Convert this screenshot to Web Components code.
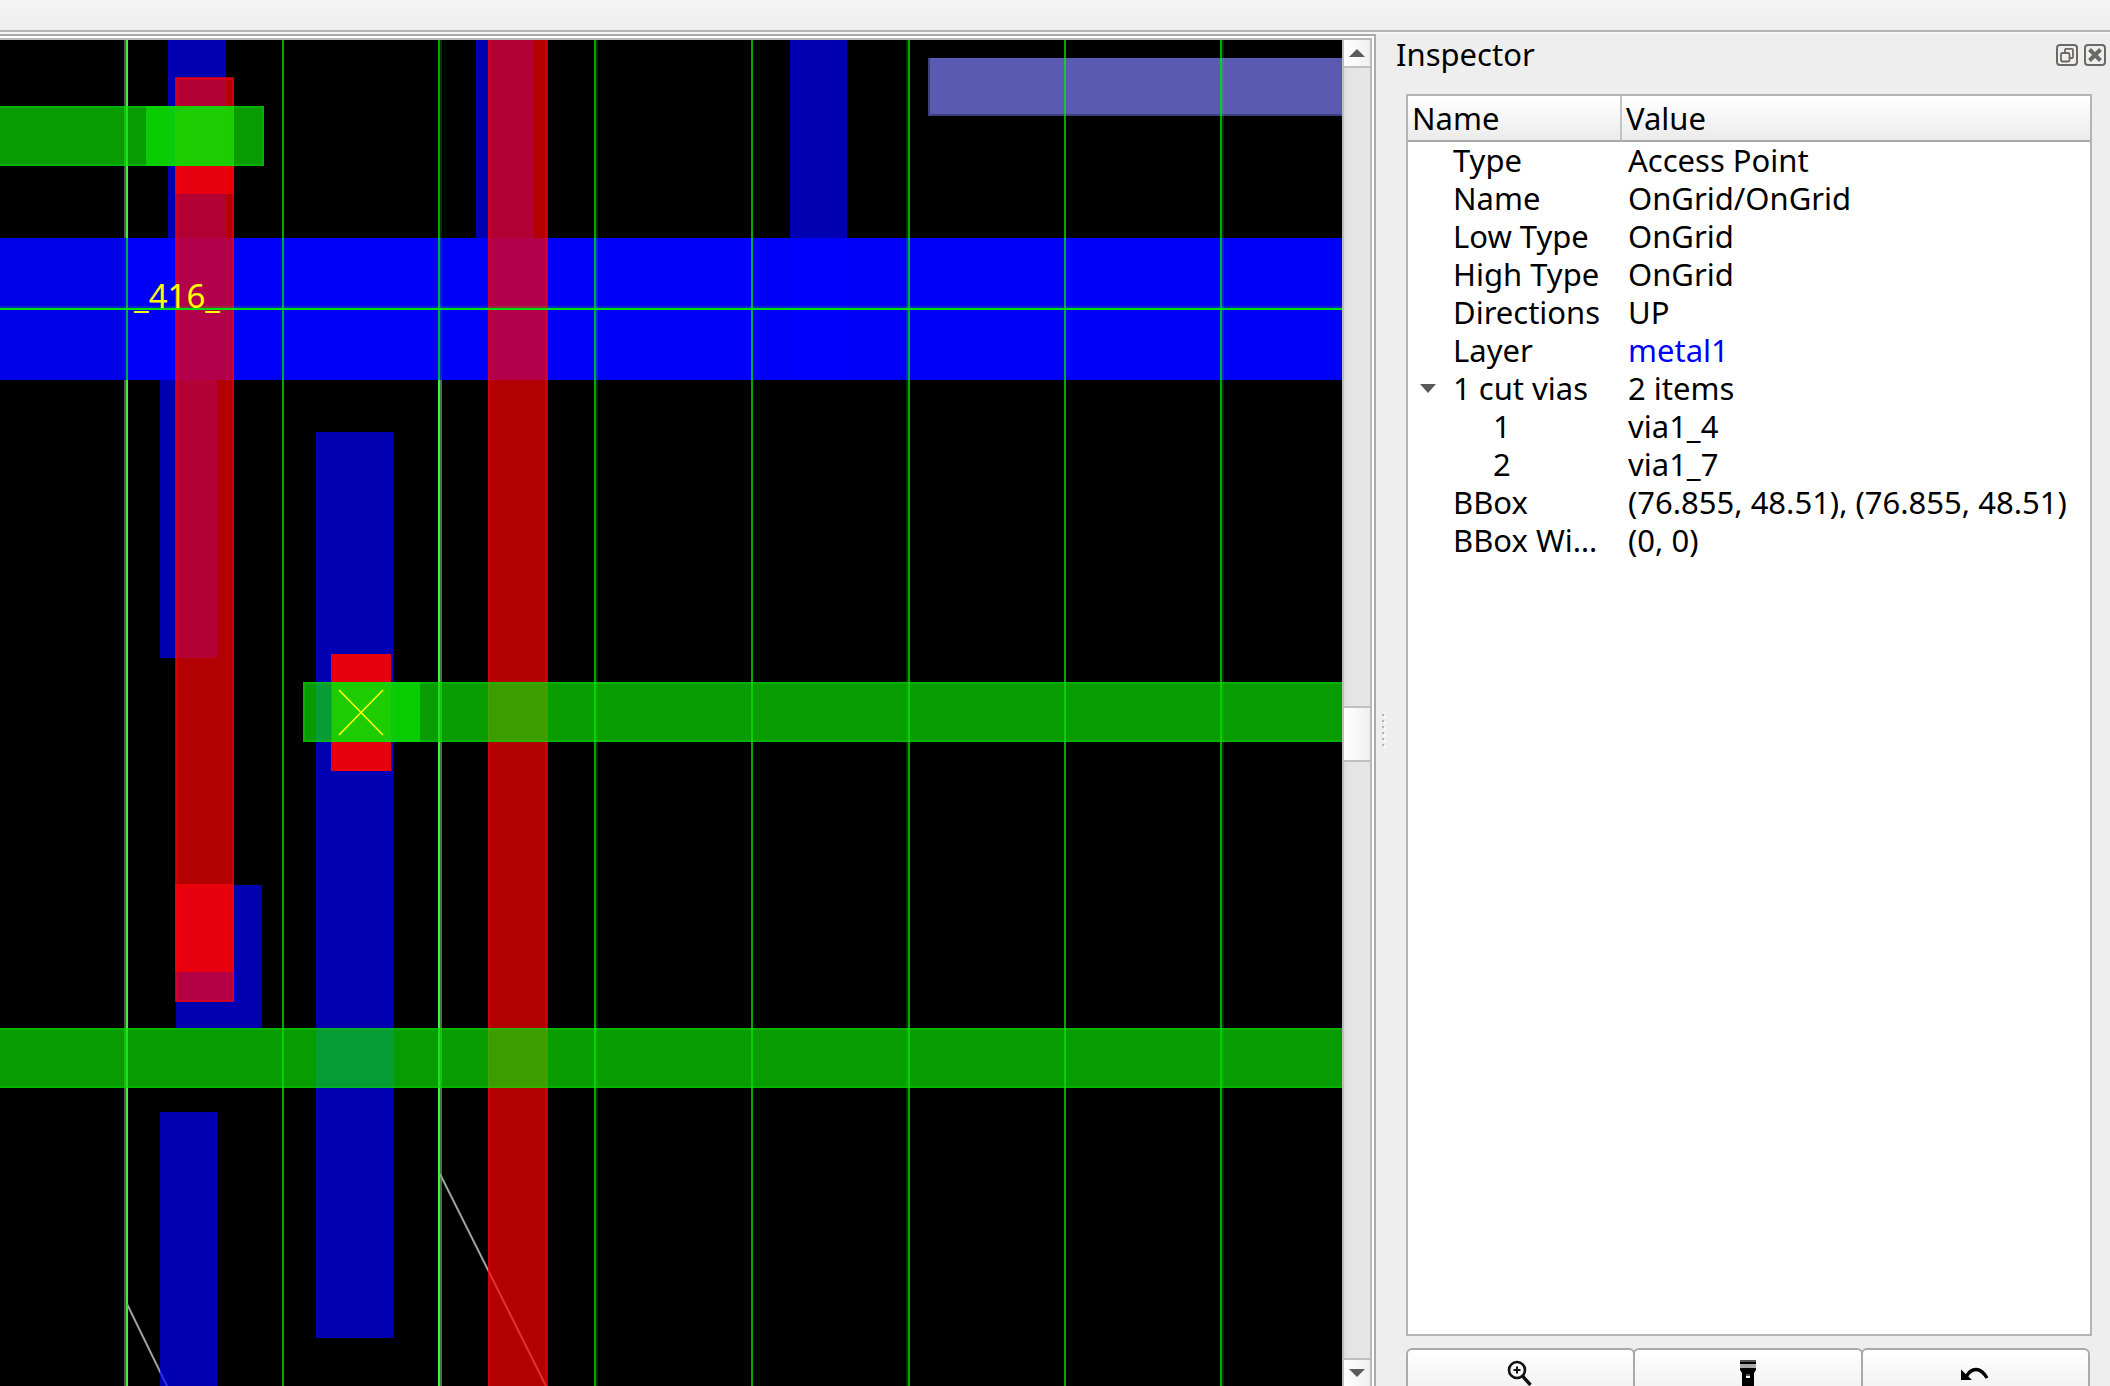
<!DOCTYPE html>
<html lang="en">
<head>
<meta charset="utf-8">
<title>Layout viewer</title>
<style>
  html, body { margin: 0; height: 100%; overflow: hidden; background: #eee; }
  body { font: 31px/36px "Noto Sans", "Open Sans", sans-serif; color: #000; }
</style>
</head>
<body>
<layout-app></layout-app>

<script>
class ShadowElement extends HTMLElement {
  constructor() {
    super();
    this.attachShadow({ mode: "open" }).innerHTML = this.constructor.markup;
  }
}

class LayoutApp extends ShadowElement {
  static markup = `
    <style>
      :host { display: flex; flex-direction: column; height: 100vh; }
      header { flex: none; height: 30px; background: linear-gradient(#f4f4f4, #eee);
               border-bottom: 2px solid #b4b4b4; }
      main { flex: 1; min-height: 0; display: flex; border-top: 2px solid #f6f6f6; }
      .view { flex: 1; min-width: 0; display: flex; border: solid #ababab; border-width: 2px 2px 0 0; }
      .frame { flex: 1; min-width: 0; display: flex; border: solid #b8b8b8; border-width: 2px 2px 0 0;
               margin: 2px 2px 0 0; outline: 2px solid #fff; }
      layout-canvas { flex: 1; min-width: 0; }
      inspector-dock { flex: 0 0 720px; }
    </style>
    <header></header>
    <main>
      <div class="view"><div class="frame">
        <layout-canvas></layout-canvas>
        <view-scrollbar></view-scrollbar>
      </div></div>
      <dock-splitter></dock-splitter>
      <inspector-dock heading="Inspector">
        <property-table></property-table>
        <action-bar slot="actions"></action-bar>
      </inspector-dock>
    </main>`;
}

class LayoutCanvas extends ShadowElement {
  static markup = `
    <style>
      :host { display: block; overflow: hidden; background: #000; }
      svg { display: block; width: 100%; height: 100%; }
      rect { shape-rendering: crispEdges; }
      .m1 { fill: #00f; fill-opacity: .7; }
      .m2 { fill: #f00; fill-opacity: .7; }
      .m3 { fill: #0ae000; fill-opacity: .7; }
      .edge2 { fill: #f00; fill-opacity: .4; }
      .edge3 { fill: #0ae000; fill-opacity: .3; }
      .inst { fill: #e3e3e3; }
      .inst-soft { fill: #555; }
      .track { fill: #00f000; fill-opacity: .7; }
      .soft { fill: #00f000; fill-opacity: .2; }
      text { font: 33px "Noto Sans", sans-serif; fill: #ff0; }
    </style>
    <svg role="img" aria-label="Routing layout">
      <g transform="translate(0 -40)">
        <rect class="inst-soft" x="124" y="40" width="2" height="100%"/>
        <rect class="inst" x="126" y="40" width="2" height="100%"/>
        <rect class="inst" x="438" y="380" width="2" height="100%"/>
        <rect class="inst-soft" x="440" y="380" width="2" height="100%"/>
        <path d="M127 1304 168 1388M440 1174 547 1388" stroke="#a0a0a0" stroke-width="2" fill="none"/>

        <g class="m1">
          <rect x="0" y="238" width="100%" height="142"/>
          <rect x="0" y="238" width="100%" height="142"/>
          <rect x="126" y="238" width="100%" height="142"/>
          <rect x="168" y="40" width="58" height="198"/>
          <rect x="160" y="238" width="57" height="420"/>
          <rect x="476" y="40" width="58" height="340"/>
          <rect x="790" y="40" width="57" height="340"/>
          <rect x="316" y="432" width="78" height="906"/>
          <rect x="176" y="885" width="86" height="143"/>
          <rect x="175" y="972" width="60" height="30"/>
          <rect x="160" y="1112" width="57" height="100%"/>
        </g>
        <rect x="928" y="58" width="100%" height="58" fill="#3f3f7d"/>
        <rect x="930" y="58" width="100%" height="56" fill="#5a5ab3"/>

        <g class="track">
          <rect x="126" y="40" width="2" height="100%"/>
          <rect x="282" y="40" width="2" height="100%"/>
          <rect x="438" y="40" width="2" height="100%"/>
          <rect x="594" y="40" width="2" height="100%"/>
          <rect x="751" y="40" width="2" height="100%"/>
          <rect x="908" y="40" width="2" height="100%"/>
          <rect x="1064" y="40" width="2" height="100%"/>
          <rect x="1220" y="40" width="2" height="100%"/>
        </g>
        <g class="soft">
          <rect x="440" y="40" width="2" height="100%"/>
          <rect x="596" y="40" width="2" height="100%"/>
          <rect x="906" y="40" width="2" height="100%"/>
          <rect x="1222" y="40" width="2" height="100%"/>
        </g>

        <g class="m2">
          <rect x="175" y="77" width="59" height="925"/>
          <rect x="175" y="106" width="59" height="88"/>
          <rect x="175" y="884" width="59" height="88"/>
          <rect x="331" y="654" width="60" height="117"/>
          <rect x="331" y="654" width="60" height="117"/>
          <rect x="488" y="40" width="60" height="100%"/>
        </g>
        <g class="edge2">
          <rect x="176" y="78" width="2" height="924"/>
          <rect x="232" y="78" width="2" height="924"/>
          <rect x="178" y="78" width="54" height="2"/>
          <rect x="178" y="1000" width="54" height="2"/>
          <rect x="488" y="40" width="2" height="100%"/>
          <rect x="545" y="40" width="2" height="100%"/>
        </g>

        <g class="m3">
          <rect x="0" y="106" width="264" height="60"/>
          <rect x="146" y="106" width="88" height="60"/>
          <rect x="303" y="682" width="100%" height="60"/>
          <rect x="332" y="682" width="88" height="60"/>
          <rect x="0" y="1028" width="100%" height="60"/>
        </g>
        <g class="edge3">
          <rect x="0" y="106" width="264" height="2"/>
          <rect x="0" y="164" width="264" height="2"/>
          <rect x="262" y="108" width="2" height="56"/>
          <rect x="303" y="684" width="2" height="56"/>
          <rect x="303" y="740" width="100%" height="2"/>
          <rect x="303" y="682" width="100%" height="2"/>
          <rect x="0" y="1028" width="100%" height="2"/>
          <rect x="0" y="1086" width="100%" height="2"/>
        </g>

        <rect class="soft" x="0" y="306" width="100%" height="2"/>
        <rect x="0" y="308" width="100%" height="2" fill="#00e010"/>
        <text x="134" y="308">_416_</text>
        <path d="M339 690 383 735M339 735 383 690" stroke="#ff0" stroke-width="1.600" fill="none"/>
      </g>
    </svg>`;
}

class ViewScrollbar extends ShadowElement {
  static markup = `
    <style>
      :host { display: flex; flex-direction: column; flex: 0 0 26px; border-left: 2px solid #bfbfbf;
              background: linear-gradient(90deg, #dadada, #e4e4e4 15%, #e6e6e6); }
      button, .thumb { flex: none; box-sizing: border-box; margin: 0; padding: 0; border: 0 solid #bfbfbf;
               background: linear-gradient(90deg, #fff, #f0f0f0); }
      button { height: 28px; display: flex; align-items: center; justify-content: center; }
      .up { border-bottom-width: 2px; }
      .down { border-top-width: 2px; }
      .thumb { height: 56px; border-width: 2px 0; }
      .before { flex: 638; }
      .after { flex: 596; }
      svg { display: block; fill: #5a5a5a; }
    </style>
    <button class="up" aria-label="Scroll up"><svg width="16" height="8"><path d="M0 8 8 0 16 8z"/></svg></button>
    <div class="before"></div><div class="thumb"></div><div class="after"></div>
    <button class="down" aria-label="Scroll down"><svg width="16" height="8"><path d="M0 0 8 8 16 0z"/></svg></button>`;
}

class DockSplitter extends ShadowElement {
  static markup = `
    <style>
      :host { flex: 0 0 14px; display: flex; flex-direction: column; align-items: center; padding-top: 40px;
              box-sizing: border-box; justify-content: center; gap: 4px; background: #eee; cursor: col-resize; }
      i { width: 2px; height: 2px; background: #b4b4b4; box-shadow: 2px 2px #fafafa; }
    </style>
    <i></i><i></i><i></i><i></i><i></i><i></i>`;
}

class InspectorDock extends ShadowElement {
  static markup = `
    <style>
      :host { display: flex; flex-direction: column; min-height: 0; background: #eee; }
      .title { display: flex; align-items: center; gap: 6px; height: 42px; padding: 0 4px 0 6px; }
      h1 { flex: 1; margin: 0; padding-bottom: 2px; font: inherit; }
      button { padding: 0; border: 0; background: none; width: 22px; height: 22px; }
      svg { display: block; }
      .body { flex: 1; min-height: 0; display: flex; margin: 18px 18px 12px 16px; }
      ::slotted(property-table) { flex: 1; }
    </style>
    <div class="title">
      <h1></h1>
      <button aria-label="Float"><svg width="22" height="22" fill="none" stroke="#6b6963" stroke-width="2">
        <rect x="1" y="1" width="20" height="20" rx="3"/>
        <path stroke-width="1.800" d="M9 8V5.800q0-1 1-1h6q1 0 1 1V13q0 1-1 1h-2"/>
        <rect stroke-width="1.800" x="5" y="9" width="8.500" height="8.500" rx="1.500"/></svg></button>
      <button aria-label="Close"><svg width="22" height="22" fill="none" stroke="#6b6963" stroke-width="2">
        <rect x="1" y="1" width="20" height="20" rx="3"/>
        <path stroke-width="4" d="M5.500 5.500 16.500 16.500M16.500 5.500 5.500 16.500"/></svg></button>
    </div>
    <div class="body"><slot></slot></div>
    <slot name="actions"></slot>`;
  connectedCallback() {
    this.shadowRoot.querySelector("h1").textContent = this.getAttribute("heading");
  }
}

class PropertyTable extends ShadowElement {
  static markup = `
    <style>
      :host { display: block; background: #fff; border: 2px solid #b4b4b4; }
      table { width: 100%; table-layout: fixed; border-spacing: 0; }
      col.name { width: 214px; }
      th { height: 44px; padding: 0 4px; font: inherit; text-align: left;
           background: linear-gradient(#fff, #f6f6f6 50%, #ebebeb); border-bottom: 2px solid #a8a8a8; }
      th:first-child { border-right: 2px solid #c4c4c4; }
      td { padding: 0 0 2px 6px; white-space: nowrap; }
      td:first-child { padding-left: 0; }
      .cell { display: grid; grid-template-columns: 45px 1fr; }
      .child { padding-left: 40px; }
      a { color: #00f; text-decoration: none; }
      button { display: flex; align-items: center; padding: 0 0 0 12px; border: 0; background: none; }
      svg { display: block; fill: #5a5a5a; }
    </style>
    <table>
      <colgroup><col class="name"><col></colgroup>
      <thead><tr><th scope="col">Name</th><th scope="col">Value</th></tr></thead>
      <tbody></tbody>
    </table>`;
  rows = [
    ["Type", "Access Point"],
    ["Name", "OnGrid/OnGrid"],
    ["Low Type", "OnGrid"],
    ["High Type", "OnGrid"],
    ["Directions", "UP"],
    ["Layer", '<a href="#metal1">metal1</a>'],
    ["1 cut vias", "2 items", "group"],
    ["1", "via1_4", "child"],
    ["2", "via1_7", "child"],
    ["BBox", "(76.855, 48.51), (76.855, 48.51)"],
    ["BBox Wi…", "(0, 0)"],
  ];
  connectedCallback() {
    const toggle = '<button aria-label="Collapse"><svg width="16" height="9"><path d="M0 0 8 9 16 0z"/></svg></button>';
    this.shadowRoot.querySelector("tbody").innerHTML = this.rows.map(([name, value, kind]) =>
      `<tr><td><div class="cell ${kind === "child" ? "child" : ""}">${kind === "group" ? toggle : "<i></i>"}<span>${name}</span></div></td>` +
      `<td>${value}</td></tr>`).join("");
  }
}

class ActionBar extends ShadowElement {
  static markup = `
    <style>
      :host { display: flex; flex: none; height: 38px; overflow: hidden; margin: 0 20px 0 16px; }
      button { flex: 1; box-sizing: border-box; height: 54px; padding: 10px 0 0; border: 2px solid #aaa;
               border-radius: 6px; background: linear-gradient(#fff, #eee);
               display: flex; align-items: flex-start; justify-content: center; }
      button + button { margin-left: -2px; }
      svg { display: block; }
    </style>
    <button aria-label="Zoom to"><svg width="28" height="28" viewBox="2 0 28 28" fill="none" stroke="#111">
      <circle cx="12" cy="10" r="8" stroke-width="2.600"/>
      <path stroke-width="2" d="M12 6.500v7M8.500 10h7"/><path stroke-width="3.400" d="m17.500 16 8 9"/></svg></button>
    <button aria-label="Highlight"><svg width="16" height="34">
      <path d="M0 0h16v2H0z" fill="#555"/><path d="M0 2h16v2H0z"/><path d="M0 4h16v4H0z" fill="#aaa"/>
      <path d="M0 8h16v2l-2 3v21H2V13L0 10z"/><path d="M6 14h4v2H6z" fill="#555"/><path d="M6 16h4v2H6z" fill="#fff"/></svg></button>
    <button aria-label="Undo"><svg width="28" height="28">
      <path d="M0 9.500V20h11z"/><path d="M5 17Q9 9.500 15 9.500T26 18" fill="none" stroke="#000" stroke-width="3.400"/></svg></button>`;
}

customElements.define("layout-canvas", LayoutCanvas);
customElements.define("view-scrollbar", ViewScrollbar);
customElements.define("dock-splitter", DockSplitter);
customElements.define("inspector-dock", InspectorDock);
customElements.define("property-table", PropertyTable);
customElements.define("action-bar", ActionBar);
customElements.define("layout-app", LayoutApp);
</script>
</body>
</html>
